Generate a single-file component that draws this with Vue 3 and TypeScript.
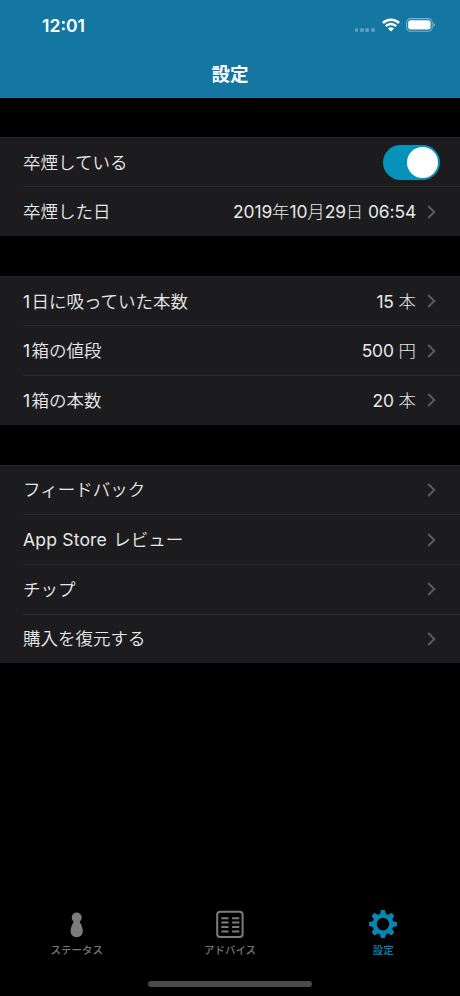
<script setup lang="ts">
import { ref } from 'vue'

interface Row {
  label: string
  value?: string
  toggle?: boolean
}

interface Run {
  text: string
  latin: boolean
}

const quit = ref(true)

const groups: Row[][] = [
  [
    { label: '卒煙している', toggle: true },
    { label: '卒煙した日', value: '2019年10月29日 06:54' },
  ],
  [
    { label: '1日に吸っていた本数', value: '15 本' },
    { label: '1箱の値段', value: '500 円' },
    { label: '1箱の本数', value: '20 本' },
  ],
  [
    { label: 'フィードバック' },
    { label: 'App Store レビュー' },
    { label: 'チップ' },
    { label: '購入を復元する' },
  ],
]

// Latin and Japanese runs carry different weights
const runs = (text: string): Run[] =>
  (text.match(/[\x20-\x7e]+|[^\x20-\x7e]+/g) ?? []).map((t) => ({
    text: t,
    latin: /^[\x20-\x7e]/.test(t),
  }))

const teeth = [0, 45, 90, 135, 180, 225, 270, 315]
</script>

<template>
  <div class="screen">
    <header class="header">
      <div class="status">
        <span class="time">12:01</span>
        <div class="indicators">
          <span class="signal"><i v-for="n in 4" :key="n"></i></span>
          <svg class="wifi" width="18" height="14" viewBox="0 0 18 14">
            <path d="M.9 5C5.4 .5 12.6 .5 17.1 5M3.8 8.2C6.8 5.3 11.2 5.3 14.2 8.2" fill="none" stroke="#fff" stroke-width="2.5" />
            <path d="M6 10.6C7.7 8.9 10.3 8.9 12 10.6L9 13.6Z" fill="#fff" />
          </svg>
          <svg class="battery" width="30" height="14" viewBox="0 0 30 14">
            <rect x=".6" y=".6" width="25.6" height="12.6" rx="4" fill="none" stroke="#fff" stroke-opacity=".45" stroke-width="1.1" />
            <rect x="2.2" y="2.2" width="22.4" height="9.4" rx="2.4" fill="#fff" />
            <path d="M27.5 4.8C29.3 5.4 29.3 8.4 27.5 9Z" fill="#fff" fill-opacity=".5" />
          </svg>
        </div>
      </div>
      <h1 class="title">設定</h1>
    </header>

    <main class="content">
      <section v-for="(rows, g) in groups" :key="g" class="group">
        <div v-for="row in rows" :key="row.label" class="row">
          <span class="label"><span v-for="(r, i) in runs(row.label)" :key="i" :class="{ latin: r.latin }">{{ r.text }}</span></span>
          <button
            v-if="row.toggle"
            class="switch"
            :class="{ on: quit }"
            role="switch"
            :aria-checked="quit"
            @click="quit = !quit"
          ><span class="knob"></span></button>
          <template v-else>
            <span v-if="row.value" class="value"><span v-for="(r, i) in runs(row.value)" :key="i" :class="{ latin: r.latin }">{{ r.text }}</span></span>
            <svg class="chevron" width="9" height="14" viewBox="0 0 9 14">
              <path d="M1.2 1L7.3 7L1.2 13" fill="none" stroke="#5b5b5f" stroke-width="2" />
            </svg>
          </template>
        </div>
      </section>
    </main>

    <nav class="tabs">
      <div class="tab">
        <svg width="28" height="28" viewBox="0 0 28 28">
          <circle cx="13.7" cy="7.6" r="5" fill="#7c7c7c" />
          <path d="M11.2 11.2H16.2C17.9 14 19.8 16.8 19.8 21C19.8 24.8 17.3 27.2 13.7 27.2S7.6 24.8 7.6 21C7.6 16.8 9.5 14 11.2 11.2Z" fill="#7c7c7c" />
        </svg>
        <span>ステータス</span>
      </div>
      <div class="tab">
        <svg width="28" height="28" viewBox="0 0 28 28" fill="none" stroke="#7c7c7c">
          <rect x="1.2" y="1.8" width="25.4" height="25.2" rx="3" stroke-width="2" />
          <path d="M5.3 8.3H12.5M16.1 8.3H23.3M5.3 12.6H12.5M16.1 12.6H23.3M5.3 17H12.5M16.1 17H23.3M5.3 21.4H12.5M16.1 21.4H23.3" stroke-width="2" />
        </svg>
        <span>アドバイス</span>
      </div>
      <div class="tab active">
        <svg width="28" height="28" viewBox="0 0 28 28">
          <circle cx="14" cy="14.1" r="8.4" fill="none" stroke="#0786b1" stroke-width="4.2" />
          <path
            v-for="a in teeth"
            :key="a"
            d="M10.8 5L11.8 .7Q12 .1 12.6 .1H15.4Q16 .1 16.2 .7L17.2 5Z"
            fill="#0786b1"
            :transform="`rotate(${a} 14 14.1)`"
          />
        </svg>
        <span>設定</span>
      </div>
    </nav>
    <div class="home"><span></span></div>
  </div>
</template>

<style>
body {
  background: #000;
}
</style>

<style scoped>
.screen {
  display: flex;
  flex-direction: column;
  width: 460px;
  height: 996px;
  overflow: hidden;
  background: #000;
  color: #e8e8e8;
  font-family: Inter, "Noto Sans CJK JP", sans-serif;
}
.header {
  flex: none;
  height: 97.7px;
  background: #1477a2;
  color: #fff;
}
.status {
  display: flex;
  justify-content: space-between;
  height: 50px;
  padding: 0 24px 0 42px;
}
.time {
  font-size: 17.6px;
  font-weight: 600;
  line-height: 52px;
}
.indicators {
  display: flex;
  align-items: flex-start;
  padding-top: 18.4px;
}
.signal {
  display: flex;
  gap: 1.7px;
  margin: 9.5px 7px 0 0;
}
.signal i {
  width: 3.7px;
  height: 3.7px;
  border-radius: 1.5px;
  background: #5ca0be;
}
.wifi {
  margin-right: 6.5px;
}
.title {
  margin: 0;
  text-align: center;
  font-size: 18.5px;
  font-weight: 600;
  line-height: 48px;
}
.content {
  flex: 1;
  display: flex;
  flex-direction: column;
  gap: 39.7px;
  padding-top: 39.1px;
}
.group {
  background: #1c1c1e;
  box-shadow: inset 0 1px #242426;
}
.row {
  display: flex;
  align-items: center;
  height: 49.68px;
  box-sizing: border-box;
  margin-left: 23px;
  padding: 1px 24px 0 0;
  font-size: 17.5px;
  line-height: 26px;
  white-space: pre;
  font-weight: 350;
}
.row + .row {
  box-shadow: inset 0 1px #2a2a2c;
}
.label {
  flex: 1;
  padding-top: 1px;
}
.label .latin {
  font-size: 17.6px;
  letter-spacing: 0.15px;
}
.label .latin:first-child:not(:only-child) {
  padding-right: 1.2px;
}
.latin {
  font-weight: 400;
}
.value {
  margin-right: 11px;
  padding-top: 1px;
  font-size: 17.4px;
  font-weight: 300;
}
.value .latin {
  letter-spacing: -0.12px;
}
.switch {
  display: flex;
  align-items: center;
  width: 57px;
  height: 35px;
  margin-right: -4px;
  padding: 0 2px;
  border: 0;
  border-radius: 18px;
  background: #39393d;
}
.switch.on {
  justify-content: flex-end;
  background: #0792ba;
}
.knob {
  width: 31px;
  height: 31px;
  border-radius: 50%;
  background: #fff;
}
.tabs {
  display: flex;
  height: 64px;
}
.tab {
  flex: 1;
  display: flex;
  flex-direction: column;
  align-items: center;
  color: #777;
  font-size: 10.5px;
  font-weight: 500;
  line-height: 16px;
}
.tab span {
  margin-top: 4.6px;
}
.tab.active {
  color: #0786b1;
}
.home {
  display: flex;
  justify-content: center;
  height: 15px;
  padding-top: 7px;
}
.home span {
  width: 164px;
  height: 6px;
  border-radius: 3px;
  background: #4a4a4a;
}
</style>
